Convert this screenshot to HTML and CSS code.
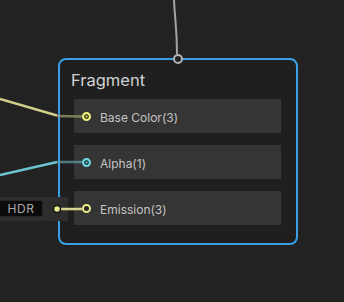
FILE: index.html
```html
<html lang="en">
<head>
    <meta charset="UTF-8">
    <title>Fragment</title>
    <link rel="stylesheet" href="styles.css">
</head>
<body>
    <div class="graph">
        <!-- wires behind the node -->
        <svg class="wires" width="344" height="302">
            <path d="M174 0 C175 22 177 28 177 54" stroke="#a3a3a3" stroke-width="2" fill="none"/>
            <path d="M0 99 L57 115.5" stroke="#cfcf8c" stroke-width="2.5" fill="none"/>
            <path d="M0 175 L57 162" stroke="#6cc4d0" stroke-width="2.5" fill="none"/>
        </svg>

        <div class="node">
            <div class="node-title">Fragment</div>
            <div class="slot">
                <span class="port port-yellow"></span>
                <span class="slot-label">Base Color(3)</span>
            </div>
            <div class="slot">
                <span class="port port-cyan"></span>
                <span class="slot-label">Alpha(1)</span>
            </div>
            <div class="slot">
                <span class="port port-open"></span>
                <span class="slot-label">Emission(3)</span>
            </div>
            <span class="top-port"></span>
        </div>

        <div class="field">
            <div class="field-box">HDR</div>
        </div>

        <!-- short links drawn over the node -->
        <svg class="links" width="344" height="302">
            <path d="M57 116 L82 116.5" stroke="#9c9c6c" stroke-width="2.5" opacity="0.75" fill="none"/>
            <path d="M57 162 L82 162" stroke="#5e9aa2" stroke-width="2.5" opacity="0.75" fill="none"/>
            <path d="M57 209 L83 209" stroke="#d6d68c" stroke-width="2.5" fill="none"/>
            <circle cx="57" cy="209" r="3.5" fill="#e9e98a" stroke="#141414" stroke-width="1.5"/>
        </svg>
    </div>
</body>
</html>
```

FILE: styles.css
```css
body {
    margin: 0;
    background-color: #222222;
    font-family: Inter, "Noto Sans", sans-serif;
}

.graph {
    position: relative;
    width: 344px;
    height: 302px;
    overflow: hidden;
}

.wires, .links {
    position: absolute;
    left: 0;
    top: 0;
}

.links {
    z-index: 2;
}

.node {
    position: absolute;
    left: 58px;
    top: 58px;
    width: 240px;
    height: 187px;
    box-sizing: border-box;
    border: 2px solid #3aa0e4;
    border-radius: 8px;
    background-color: #1f1f1f;
    padding: 0 15px 17px 14px;
    display: flex;
    flex-direction: column;
    gap: 12px;
}

.node-title {
    font-size: 16.5px;
    line-height: 20px;
    color: #d2d2d2;
    padding-top: 10px;
    margin-left: -3px;
    margin-bottom: -3px;
}

.slot {
    height: 34px;
    background-color: #353535;
    display: flex;
    align-items: center;
    padding-left: 8px;
}

.slot-label {
    font-size: 12px;
    color: #c4c4c4;
    margin-left: 9px;
    margin-top: 3px;
}

.port {
    width: 5px;
    height: 5px;
    border-radius: 50%;
    border: 2px solid;
    box-sizing: content-box;
    margin-top: 1px;
}

.port-yellow {
    background-color: #f0f07a;
    border-color: #f0f07a;
    box-shadow: inset 0 0 0 1.5px #3a3a20;
}

.port-cyan {
    background-color: #6fd6e2;
    border-color: #6fd6e2;
    box-shadow: inset 0 0 0 1.5px #22393c;
}

.port-open {
    background-color: #262626;
    border-color: #ecec84;
}

.top-port {
    position: absolute;
    left: 113px;
    top: -6px;
    width: 6px;
    height: 6px;
    border-radius: 50%;
    border: 2px solid #b4b4b4;
    background-color: #222222;
}

.field {
    position: absolute;
    left: 0;
    top: 197px;
    width: 68px;
    height: 24px;
    background-color: #2d2d2d;
    z-index: 1;
}

.field-box {
    margin-top: 3px;
    width: 43px;
    height: 17px;
    box-sizing: border-box;
    background-color: #0b0b0b;
    border: 1px solid #262626;
    border-left: none;
    border-radius: 0 2px 2px 0;
    color: #a8a8a8;
    font-size: 12px;
    line-height: 15px;
    text-align: center;
    letter-spacing: 0.6px;
}
```
